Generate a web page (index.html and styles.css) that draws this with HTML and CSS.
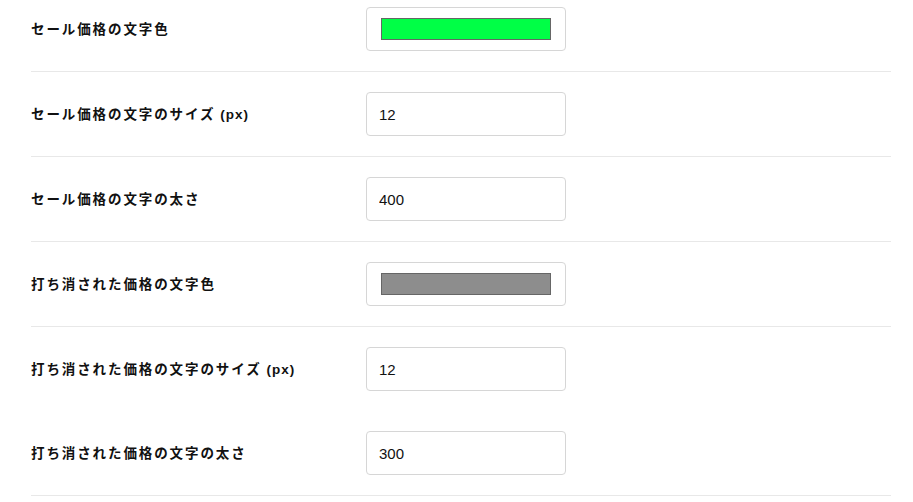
FILE: index.html
```html
<!DOCTYPE html>
<html lang="ja">
<head>
<meta charset="utf-8">
<link rel="stylesheet" href="styles.css">
</head>
<body>
<div class="form">
  <div class="row first">
    <div class="label">セール価格の文字色</div>
    <div class="field color"><span class="swatch green"></span></div>
  </div>
  <div class="row">
    <div class="label">セール価格の文字のサイズ <span class="latin">(px)</span></div>
    <input class="field text" type="text" value="12">
  </div>
  <div class="row">
    <div class="label">セール価格の文字の太さ</div>
    <input class="field text" type="text" value="400">
  </div>
  <div class="row">
    <div class="label">打ち消された価格の文字色</div>
    <div class="field color"><span class="swatch gray"></span></div>
  </div>
  <div class="row noline">
    <div class="label">打ち消された価格の文字のサイズ <span class="latin">(px)</span></div>
    <input class="field text" type="text" value="12">
  </div>
  <div class="row">
    <div class="label">打ち消された価格の文字の太さ</div>
    <input class="field text" type="text" value="300">
  </div>
</div>
</body>
</html>
```
FILE: styles.css
```css
html, body {
  margin: 0;
  padding: 0;
  background: #ffffff;
}
.form {
  margin-left: 31px;
  width: 860px;
  display: flex;
  flex-direction: column;
}
.row {
  display: flex;
  align-items: center;
  padding: 20px 0;
  border-bottom: 1px solid #e8e8e8;
}
.row.first {
  padding-top: 7px;
}
.row.noline {
  border-bottom: none;
}
.label {
  width: 335px;
  flex: none;
  box-sizing: border-box;
  padding-bottom: 3px;
  font-family: "Noto Sans CJK JP", "Noto Sans", sans-serif;
  font-weight: 700;
  font-size: 13.5px;
  letter-spacing: 1.9px;
  color: #111111;
}
.latin {
  font-family: "Liberation Sans", Arial, sans-serif;
  letter-spacing: 1px;
}
.field {
  box-sizing: border-box;
  width: 200px;
  height: 44px;
  border: 1px solid #d6d6d6;
  border-radius: 4px;
  background: #ffffff;
  margin: 0;
}
.field.text {
  padding: 0 12px;
  font-family: "Liberation Sans", Arial, sans-serif;
  font-size: 15px;
  color: #111111;
  outline: none;
}
.field.color {
  display: flex;
  padding: 10px 14px;
}
.swatch {
  display: block;
  flex: 1;
  border: 1px solid #666666;
}
.swatch.green {
  background: #00ff46;
}
.swatch.gray {
  background: #8d8d8d;
}
```
